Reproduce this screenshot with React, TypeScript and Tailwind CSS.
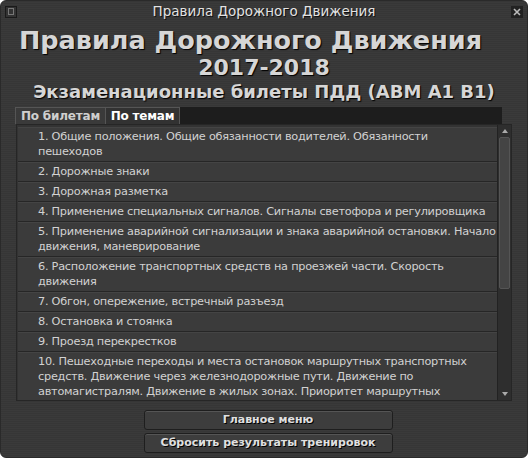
import React from "react";

const items: string[][] = [
  ["1. Общие положения. Общие обязанности водителей. Обязанности", "пешеходов"],
  ["2. Дорожные знаки"],
  ["3. Дорожная разметка"],
  ["4. Применение специальных сигналов. Сигналы светофора и регулировщика"],
  ["5. Применение аварийной сигнализации и знака аварийной остановки. Начало", "движения, маневрирование"],
  ["6. Расположение транспортных средств на проезжей части. Скорость", "движения"],
  ["7. Обгон, опережение, встречный разъезд"],
  ["8. Остановка и стоянка"],
  ["9. Проезд перекрестков"],
  [
    "10. Пешеходные переходы и места остановок маршрутных транспортных",
    "средств. Движение через железнодорожные пути. Движение по",
    "автомагистралям. Движение в жилых зонах. Приоритет маршрутных",
    "транспортных средств",
  ],
  ["11. Световые приборы"],
];

export default function App() {
  return (
    <div className="w-[528px] h-[458px] bg-white" style={{ fontFamily: '"DejaVu Sans", Verdana, sans-serif' }}>
      <div className="w-full h-full rounded-[6px] overflow-hidden flex flex-col border border-[#2a2a2a] bg-[repeating-linear-gradient(0deg,#3a3a3a_0px,#3a3a3a_1px,#363636_1px,#363636_2px)]">
        {/* title bar */}
        <div className="h-[21px] flex items-center justify-between px-[4px] shrink-0">
          <div className="w-[12px] h-[12px] border border-[#1a1a1a] bg-[#333] flex items-center justify-center">
            <div className="w-[6px] h-[7px] border border-[#777]" />
          </div>
          <div className="text-[13.5px] text-[#e2e2e2] [text-shadow:1px_1px_0_#111]">Правила Дорожного Движения</div>
          <div className="w-[12px] h-[12px] bg-[#222] flex items-center justify-center">
            <svg width="8" height="8" viewBox="0 0 8 8">
              <path d="M1 1L7 7M7 1L1 7" stroke="#bbb" strokeWidth="1.6" />
            </svg>
          </div>
        </div>
        {/* headings */}
        <div className="flex flex-col items-center text-[#d6d6d6] font-bold [text-shadow:1px_1px_1px_#000] shrink-0">
          <div className="text-[25.5px] leading-[32px] mt-[2px] mr-[27px] whitespace-nowrap">Правила Дорожного Движения</div>
          <div className="text-[22px] leading-[24px]">2017-2018</div>
          <div className="text-[18px] leading-[24px] whitespace-nowrap">Экзаменационные билеты ПДД (АВМ А1 В1)</div>
        </div>
        {/* tabs */}
        <div className="ml-[14px] mt-[3px] h-[17px] flex bg-[#1d1d1d] mr-[25px] shrink-0">
          <div className="w-[91px] h-full bg-[#3a3a3a] border border-[#555] border-b-0 text-[12px] font-bold text-[#cfcfcf] flex items-center justify-center leading-none whitespace-nowrap tracking-[-0.2px]">По билетам</div>
          <div className="w-[74px] h-full bg-[#323232] border-t border-r border-[#555] text-[12px] font-bold text-white flex items-center justify-center leading-none whitespace-nowrap tracking-[-0.2px]">По темам</div>
        </div>
        {/* list */}
        <div className="mx-[15px] h-[277px] flex border border-[#262626] bg-[#333] shrink-0">
          <div className="flex-1 overflow-hidden pt-[2px] pl-[1px]">
            {items.map((lines, i) => (
              <div key={i} className="pl-[20px] pr-[2px] pt-[2px] pb-[2px] border-b border-[#262626] shadow-[inset_0_1px_0_#444] bg-[#3b3b3b] text-[11.3px] leading-[15px] tracking-[-0.25px] text-[#d2d2d2]">
                {lines.map((l, j) => (
                  <div key={j} className="whitespace-nowrap">{l}</div>
                ))}
              </div>
            ))}
          </div>
          <div className="w-[14px] flex flex-col bg-[#2e2e2e] border-l border-[#222]">
            <div className="h-[12px] flex items-center justify-center">
              <svg width="6" height="4" viewBox="0 0 6 4"><path d="M0 4L3 0L6 4Z" fill="#aaa" /></svg>
            </div>
            <div className="h-[152px] mx-[1px] bg-[#444] border border-[#555] rounded-[2px]" />
            <div className="flex-1" />
            <div className="h-[12px] flex items-center justify-center">
              <svg width="6" height="4" viewBox="0 0 6 4"><path d="M0 0L3 4L6 0Z" fill="#aaa" /></svg>
            </div>
          </div>
        </div>
        {/* buttons */}
        <div className="flex flex-col items-center gap-[3px] mt-[9px] ml-[8px]">
          <div className="w-[249px] h-[20px] rounded-[3px] border border-[#1e1e1e] bg-[#3d3d3d] shadow-[inset_0_1px_0_#555] flex items-center justify-center text-[11px] font-bold text-[#e0e0e0] [text-shadow:1px_1px_0_#000] whitespace-nowrap">Главное меню</div>
          <div className="w-[249px] h-[20px] rounded-[3px] border border-[#1e1e1e] bg-[#3d3d3d] shadow-[inset_0_1px_0_#555] flex items-center justify-center text-[11px] font-bold text-[#e0e0e0] [text-shadow:1px_1px_0_#000] whitespace-nowrap">Сбросить результаты тренировок</div>
        </div>
      </div>
    </div>
  );
}
